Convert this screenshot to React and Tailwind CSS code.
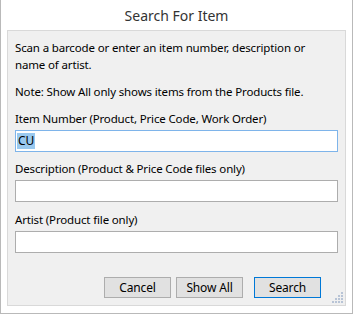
export default function App() {
  const font = { fontFamily: '"Noto Sans", "Open Sans", sans-serif' };
  return (
    <div
      className="w-[353px] h-[314px] bg-white border-x border-b border-[#b9b9b9] flex flex-col text-black"
      style={font}
    >
      <div className="h-[30px] flex items-center justify-center text-[14px] text-[#333]">
        Search For Item
      </div>
      <div className="mx-[6px] flex-1 bg-[#f0f0f0] border border-[#d9d9d9] relative flex flex-col px-[7px] pt-[8px] text-[11.5px] tracking-[-0.15px] leading-[17px]">
        <p>Scan a barcode or enter an item number, description or name of artist.</p>
        <p className="mt-[10px]">Note: Show All only shows items from the Products file.</p>

        <label className="mt-[10px]">Item Number (Product, Price Code, Work Order)</label>
        <div className="mt-[3px] h-[22px] bg-white border border-[#7eb4ea] flex items-center px-[1px]">
          <span className="bg-[#99c9ef] leading-[16px] px-[1px] text-[12px]">CU</span>
        </div>

        <label className="mt-[8px]">Description (Product &amp; Price Code files only)</label>
        <div className="mt-[3px] h-[22px] bg-white border border-[#adadad]" />

        <label className="mt-[9px]">Artist (Product file only)</label>
        <div className="mt-[3px] h-[22px] bg-white border border-[#adadad]" />

        <div className="mt-[24px] flex justify-end gap-[5px] pr-[17px]">
          <button className="w-[67px] h-[21px] bg-[#e1e1e1] border border-[#adadad] text-[12px] leading-none">Cancel</button>
          <button className="w-[67px] h-[21px] bg-[#e1e1e1] border border-[#adadad] text-[12px] leading-none">Show All</button>
          <button className="ml-[6px] w-[67px] h-[21px] bg-[#e1e1e1] border border-[#0078d7] text-[12px] leading-none">Search</button>
        </div>

        <svg className="absolute right-[1px] bottom-[1px]" width="12" height="12" viewBox="0 0 12 12">
          {[[9, 0], [6, 3], [9, 3], [3, 6], [6, 6], [9, 6], [0, 9], [3, 9], [6, 9], [9, 9]].map(([x, y], i) => (
            <rect key={i} x={x} y={y} width="2" height="2" fill="#b8c4d6" />
          ))}
        </svg>
      </div>
      <div className="h-[7px]" />
    </div>
  );
}
